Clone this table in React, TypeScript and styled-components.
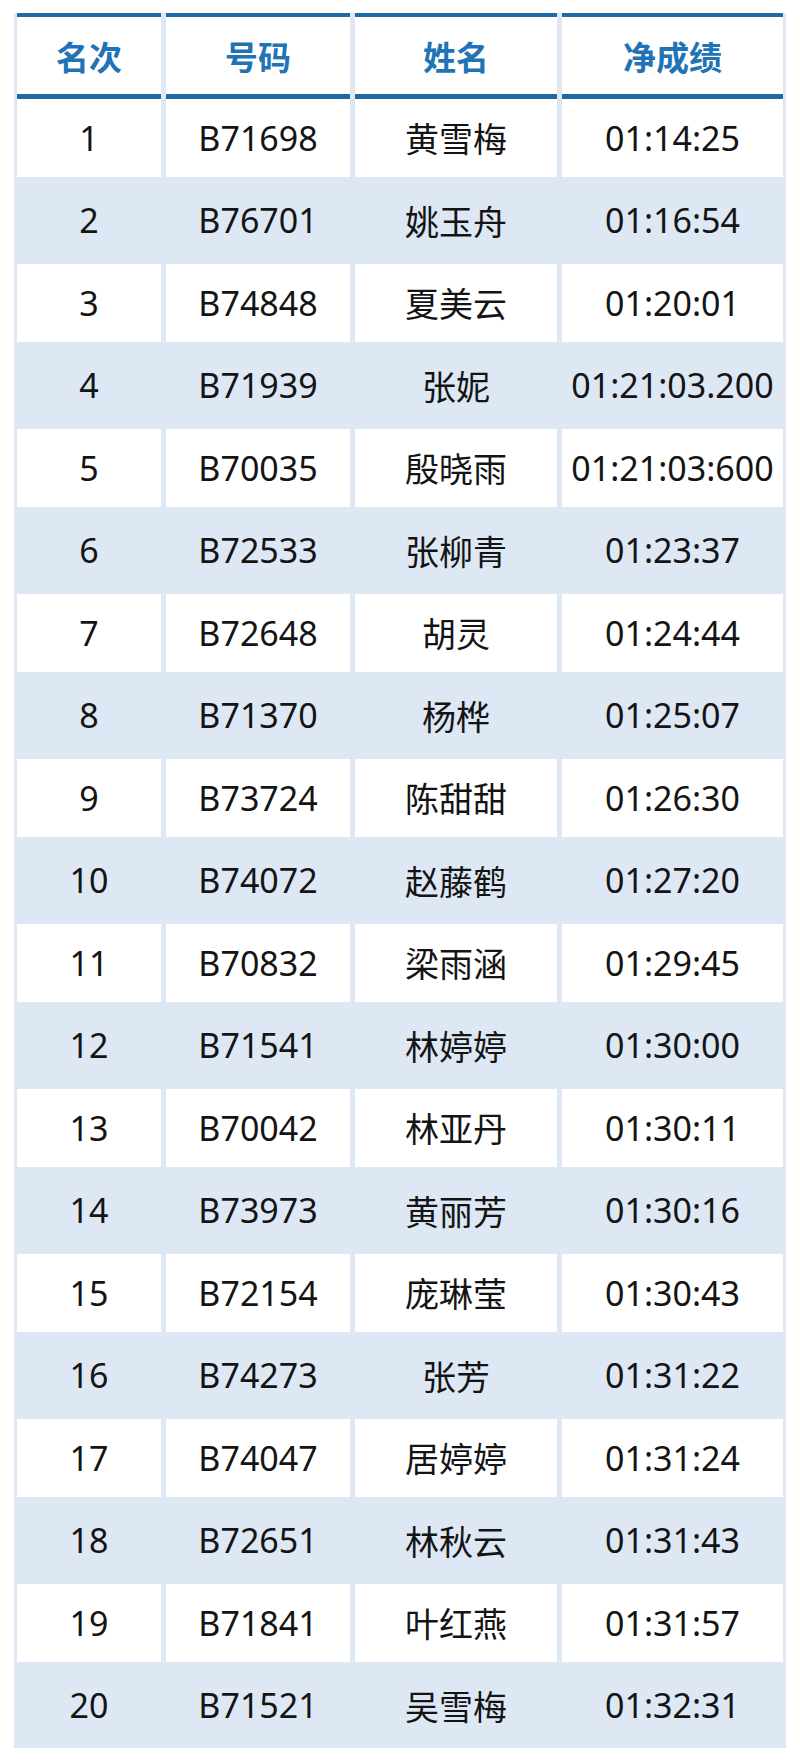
import styled, { createGlobalStyle } from "styled-components";

const GlobalStyle = createGlobalStyle`
  html, body {
    margin: 0;
    padding: 0;
    background: #ffffff;
  }
  body {
    font-family: "Noto Sans", "Noto Sans CJK SC", sans-serif;
  }
`;

const COLUMNS = "144px 184px 202px 221px";

const Page = styled.div`
  padding: 13px 14px 15px 14px;
`;

const Board = styled.div`
  width: 772px;
  box-sizing: border-box;
  background: #dde8f4;
  padding: 0 3px 4px 3px;
  display: flex;
  flex-direction: column;
`;

const HeadRow = styled.div`
  display: grid;
  grid-template-columns: ${COLUMNS};
  column-gap: 5px;
`;

const HeadCell = styled.div`
  height: 77px;
  background: #ffffff;
  border-top: 4px solid #1d6aa6;
  border-bottom: 5px solid #1d6aa6;
  display: flex;
  align-items: center;
  justify-content: center;
  font-family: "Noto Sans CJK SC", sans-serif;
  font-weight: 700;
  font-size: 33px;
  color: #1f73b6;
`;

const Body = styled.div`
  display: flex;
  flex-direction: column;
  gap: 5px;
`;

const Row = styled.div`
  display: grid;
  grid-template-columns: ${COLUMNS};
  column-gap: 5px;
`;

const Cell = styled.div<{ $white: boolean }>`
  height: 77.5px;
  background: ${(p) => (p.$white ? "#ffffff" : "transparent")};
  display: flex;
  align-items: center;
  justify-content: center;
  font-size: 34px;
  color: #141414;
  white-space: nowrap;
`;

const results: [string, string, string][] = [
  ["B71698", "黄雪梅", "01:14:25"],
  ["B76701", "姚玉舟", "01:16:54"],
  ["B74848", "夏美云", "01:20:01"],
  ["B71939", "张妮", "01:21:03.200"],
  ["B70035", "殷晓雨", "01:21:03:600"],
  ["B72533", "张柳青", "01:23:37"],
  ["B72648", "胡灵", "01:24:44"],
  ["B71370", "杨桦", "01:25:07"],
  ["B73724", "陈甜甜", "01:26:30"],
  ["B74072", "赵藤鹤", "01:27:20"],
  ["B70832", "梁雨涵", "01:29:45"],
  ["B71541", "林婷婷", "01:30:00"],
  ["B70042", "林亚丹", "01:30:11"],
  ["B73973", "黄丽芳", "01:30:16"],
  ["B72154", "庞琳莹", "01:30:43"],
  ["B74273", "张芳", "01:31:22"],
  ["B74047", "居婷婷", "01:31:24"],
  ["B72651", "林秋云", "01:31:43"],
  ["B71841", "叶红燕", "01:31:57"],
  ["B71521", "吴雪梅", "01:32:31"],
];

const headers = ["名次", "号码", "姓名", "净成绩"];

export default function App() {
  return (
    <>
      <GlobalStyle />
      <Page>
        <Board>
          <HeadRow>
            {headers.map((h) => (
              <HeadCell key={h}>{h}</HeadCell>
            ))}
          </HeadRow>
          <Body>
            {results.map(([bib, name, time], i) => {
              const white = i % 2 === 0;
              return (
                <Row key={bib}>
                  <Cell $white={white}>{i + 1}</Cell>
                  <Cell $white={white}>{bib}</Cell>
                  <Cell $white={white}>{name}</Cell>
                  <Cell $white={white}>{time}</Cell>
                </Row>
              );
            })}
          </Body>
        </Board>
      </Page>
    </>
  );
}
